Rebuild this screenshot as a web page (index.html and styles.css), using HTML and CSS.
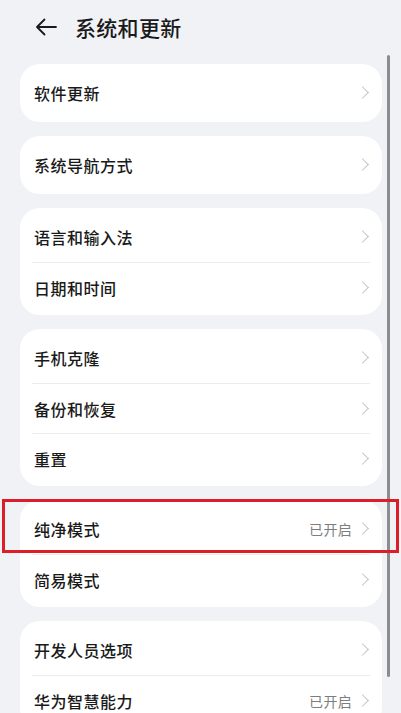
FILE: index.html
```html
<!DOCTYPE html>
<html lang="zh-CN">
<head>
<meta charset="utf-8">
<link rel="stylesheet" href="styles.css">
</head>
<body>
<div class="page">
  <header class="topbar">
    <svg class="back" width="22" height="18" viewBox="0 0 22 18"><path d="M21 9H2M9.5 1.5L2 9l7.5 7.5" fill="none" stroke="#1a1a1a" stroke-width="1.8" stroke-linecap="round" stroke-linejoin="round"/></svg>
    <h1 class="title">系统和更新</h1>
  </header>
  <main class="list">
    <section class="card single">
      <div class="row"><span class="label">软件更新</span><span class="chev"></span></div>
    </section>
    <section class="card single">
      <div class="row"><span class="label">系统导航方式</span><span class="chev"></span></div>
    </section>
    <section class="card">
      <div class="row"><span class="label">语言和输入法</span><span class="chev"></span></div>
      <div class="row"><span class="label">日期和时间</span><span class="chev"></span></div>
    </section>
    <section class="card">
      <div class="row"><span class="label">手机克隆</span><span class="chev"></span></div>
      <div class="row"><span class="label">备份和恢复</span><span class="chev"></span></div>
      <div class="row"><span class="label">重置</span><span class="chev"></span></div>
    </section>
    <section class="card">
      <div class="row"><span class="label">纯净模式</span><span class="value">已开启</span><span class="chev"></span></div>
      <div class="row"><span class="label">简易模式</span><span class="chev"></span></div>
    </section>
    <section class="card">
      <div class="row"><span class="label">开发人员选项</span><span class="chev"></span></div>
      <div class="row"><span class="label">华为智慧能力</span><span class="value">已开启</span><span class="chev"></span></div>
    </section>
  </main>
  <div class="scrollbar"></div>
  <div class="highlight"></div>
</div>
</body>
</html>
```

FILE: styles.css
```css
* { box-sizing: border-box; }
html, body {
  margin: 0;
  padding: 0;
  height: 713px;
  overflow: hidden;
  background: #f1f2f6;
  font-family: "Noto Sans CJK SC", "Noto Sans", sans-serif;
  color: #1a1a1a;
}
.page {
  position: relative;
  width: 401px;
  height: 713px;
  overflow: hidden;
}
.topbar {
  height: 54px;
  display: flex;
  align-items: center;
  padding-left: 35px;
}
.back { display: block; margin-right: 18px; }
.title {
  margin: 0;
  font-size: 21px;
  font-weight: 500;
  letter-spacing: 0.3px;
  line-height: 1;
}
.list {
  padding: 10px 19px 0 20px;
  display: flex;
  flex-direction: column;
  gap: 14px;
}
.card {
  background: #ffffff;
  border-radius: 20px;
  padding: 4px 12px 3px;
}
.card.single { padding: 0 12px; }
.row {
  height: 50px;
  display: flex;
  align-items: center;
  padding: 0 2px;
}
.card.single .row { height: 58px; }
.row + .row { border-top: 1px solid #ececee; }
.label {
  flex: 1;
  font-size: 16px;
  font-weight: 500;
  letter-spacing: 0.5px;
}
.value {
  font-size: 14px;
  color: #7d7d80;
  margin-right: 8px;
  letter-spacing: 0.3px;
}
.chev {
  width: 8px;
  height: 14px;
  position: relative;
}
.chev::before {
  content: "";
  position: absolute;
  left: -2px;
  top: 2px;
  width: 8px;
  height: 8px;
  border-top: 1.5px solid #c4c4c8;
  border-right: 1.5px solid #c4c4c8;
  transform: rotate(45deg);
}
.scrollbar {
  position: absolute;
  left: 387px;
  top: 55px;
  width: 3px;
  height: 622px;
  border-radius: 2px;
  background: #8c8c8e;
}
.highlight {
  position: absolute;
  left: 2px;
  top: 499px;
  width: 397px;
  height: 54px;
  border: 3px solid #dc1e28;
}
```
